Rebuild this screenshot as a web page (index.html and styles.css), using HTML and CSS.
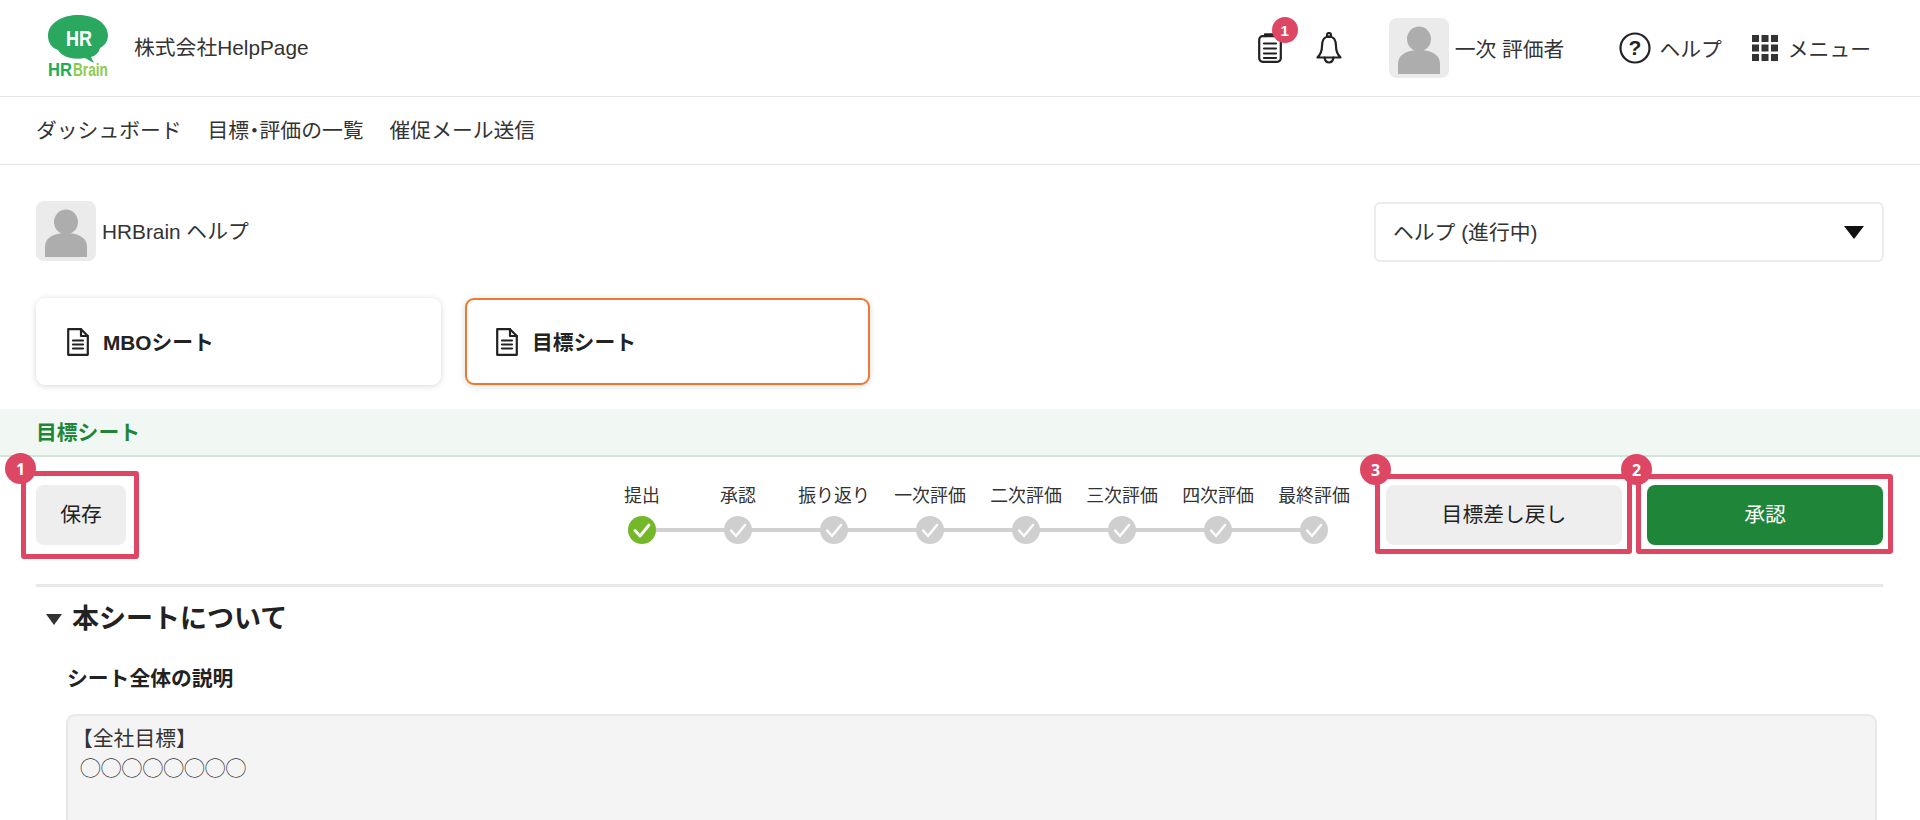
FILE: index.html
```html
<!DOCTYPE html>
<html lang="ja">
<head>
<meta charset="utf-8">
<title>目標シート</title>
<link rel="stylesheet" href="styles.css">
</head>
<body>
<header class="topbar">
  <div class="brand">
    <svg class="logo" viewBox="0 0 60 68" width="60" height="68" aria-label="HRBrain">
      <path class="logo-bubble" d="M30 0C44 0 59 6 60 20C60 27 56 31 52 33C51 38 47 41 43 42L46 48L37 43C27 45 15 43 10 35C4 33 0 28 0 21C0 7 16 0 30 0Z"/>
      <text class="logo-hr" x="18" y="31" textLength="26" lengthAdjust="spacingAndGlyphs">HR</text>
      <text class="logo-name logo-name-a" transform="translate(0 61) scale(.92 1)">HR</text>
      <text class="logo-name logo-name-b" transform="translate(25 61) scale(.76 1)">Brain</text>
    </svg>
    <span class="company">株式会社HelpPage</span>
  </div>
  <div class="top-actions">
    <div class="icon-clip">
      <svg viewBox="0 0 24 30" width="24" height="30" class="ico"><rect x="1.2" y="3.2" width="21.6" height="25.6" rx="3.5"/><path d="M7 3.2V1.4H17V3.2M6 10.5H18M6 15.5H18M6 20.5H18M6 25H18"/></svg>
      <span class="count">1</span>
    </div>
    <svg viewBox="0 0 26 32" width="26" height="32" class="ico icon-bell"><path d="M13 4.5C7.5 4.5 6 9.5 6 14C6 19 5 22 1.5 25.5H24.5C21 22 20 19 20 14C20 9.500 18.500 4.500 13 4.500Z"/><circle cx="13" cy="3" r="2"/><path d="M8.500 25.500C9 29 11 30.500 13 30.500C15 30.500 17 29 17.500 25.500"/></svg>
    <div class="user">
      <svg class="avatar" viewBox="0 0 60 60" width="60" height="60"><rect class="avatar-bg" width="60" height="60" rx="8"/><ellipse class="avatar-fg" cx="30" cy="21" rx="12" ry="12.500"/><path class="avatar-fg" d="M9 56V46C9 36 19 32 30 32C41 32 51 36 51 46V56Z"/></svg>
      <span class="user-name">一次 評価者</span>
    </div>
    <div class="top-link help-link">
      <svg viewBox="0 0 32 32" width="32" height="32" class="ico"><circle cx="16" cy="16" r="14.500"/><text class="help-q" x="16" y="23" text-anchor="middle">?</text></svg>
      <span>ヘルプ</span>
    </div>
    <div class="top-link menu-link">
      <svg viewBox="0 0 26 26" width="26" height="26" class="grid-ico"><rect width="7" height="7"/><rect x="9.500" width="7" height="7"/><rect x="19" width="7" height="7"/><rect y="9.500" width="7" height="7"/><rect x="9.500" y="9.500" width="7" height="7"/><rect x="19" y="9.500" width="7" height="7"/><rect y="19" width="7" height="7"/><rect x="9.500" y="19" width="7" height="7"/><rect x="19" y="19" width="7" height="7"/></svg>
      <span>メニュー</span>
    </div>
  </div>
</header>
<nav class="subnav">
  <a>ダッシュボード</a>
  <a>目標<span class="narrow">・</span>評価の一覧</a>
  <a>催促メール送信</a>
</nav>
<main class="page">
  <div class="person-row">
    <div class="user">
      <svg class="avatar" viewBox="0 0 60 60" width="60" height="60"><rect class="avatar-bg" width="60" height="60" rx="8"/><ellipse class="avatar-fg" cx="30" cy="21" rx="12" ry="12.500"/><path class="avatar-fg" d="M9 56V46C9 36 19 32 30 32C41 32 51 36 51 46V56Z"/></svg>
      <span class="user-name person-name">HRBrain ヘルプ</span>
    </div>
    <div class="select">
      <span class="select-text">ヘルプ (進行中)</span>
      <i class="select-arrow"></i>
    </div>
  </div>
  <div class="cards">
    <div class="card">
      <svg viewBox="0 0 22 28" width="22" height="28" class="ico doc"><path d="M1.200 1.200H14L20.800 8V26.800H1.200Z"/><path d="M14 1.200V8H20.800M6 12.500H16M6 16.500H16M6 20.500H16"/></svg>
      <span class="card-text">MBOシート</span>
    </div>
    <div class="card card-active">
      <svg viewBox="0 0 22 28" width="22" height="28" class="ico doc"><path d="M1.200 1.200H14L20.800 8V26.800H1.200Z"/><path d="M14 1.200V8H20.800M6 12.500H16M6 16.500H16M6 20.500H16"/></svg>
      <span class="card-text">目標シート</span>
    </div>
  </div>
  <div class="band">目標シート</div>
  <div class="toolbar">
    <div class="callout callout-save">
      <button class="btn btn-save">保存</button>
      <span class="callout-box"></span>
      <span class="callout-num">1</span>
    </div>
    <ol class="steps">
      <li class="step step-done"><span class="step-label">提出</span><span class="dot"><svg viewBox="0 0 28 28" width="28" height="28"><path d="M7 14.500L12 20L21 9"/></svg></span></li>
      <li class="step"><span class="step-label">承認</span><span class="dot"><svg viewBox="0 0 28 28" width="28" height="28"><path d="M7 14.500L12 20L21 9"/></svg></span></li>
      <li class="step"><span class="step-label">振り返り</span><span class="dot"><svg viewBox="0 0 28 28" width="28" height="28"><path d="M7 14.500L12 20L21 9"/></svg></span></li>
      <li class="step"><span class="step-label">一次評価</span><span class="dot"><svg viewBox="0 0 28 28" width="28" height="28"><path d="M7 14.500L12 20L21 9"/></svg></span></li>
      <li class="step"><span class="step-label">二次評価</span><span class="dot"><svg viewBox="0 0 28 28" width="28" height="28"><path d="M7 14.500L12 20L21 9"/></svg></span></li>
      <li class="step"><span class="step-label">三次評価</span><span class="dot"><svg viewBox="0 0 28 28" width="28" height="28"><path d="M7 14.500L12 20L21 9"/></svg></span></li>
      <li class="step"><span class="step-label">四次評価</span><span class="dot"><svg viewBox="0 0 28 28" width="28" height="28"><path d="M7 14.500L12 20L21 9"/></svg></span></li>
      <li class="step"><span class="step-label">最終評価</span><span class="dot"><svg viewBox="0 0 28 28" width="28" height="28"><path d="M7 14.500L12 20L21 9"/></svg></span></li>
    </ol>
    <div class="callout callout-wide">
      <button class="btn btn-wide">目標差し戻し</button>
      <span class="callout-box"></span>
      <span class="callout-num">3</span>
    </div>
    <div class="callout callout-wide">
      <button class="btn btn-wide btn-primary">承認</button>
      <span class="callout-box"></span>
      <span class="callout-num">2</span>
    </div>
  </div>
  <section class="about">
    <h2 class="about-title"><i class="about-arrow"></i>本シートについて</h2>
    <h3 class="about-sub">シート全体の説明</h3>
    <div class="about-box"><span class="about-head">【全社目標】</span><br>◯◯◯◯◯◯◯◯</div>
  </section>
</main>
</body>
</html>
```
FILE: styles.css
```css
* { box-sizing: border-box; }
html, body { margin: 0; height: 820px; overflow: hidden; background: #fff; }
body {
  font-family: "Liberation Sans", "Noto Sans CJK JP", sans-serif;
  font-size: 20.8px;
  color: #333;
}
.ico { fill: none; stroke: #222; stroke-width: 2.2; stroke-linejoin: round; stroke-linecap: round; display: block; }

.topbar {
  height: 97px;
  border-bottom: 1px solid #e2e2ea;
  display: flex;
  align-items: center;
  justify-content: space-between;
  padding: 0 49px 0 48px;
}
.brand { display: flex; align-items: center; gap: 26px; }
.logo { display: block; margin-top: 2px; }
.logo-bubble { fill: #2aa860; }
.logo-hr { fill: #fff; font-size: 22px; font-weight: 700; }
.logo-name { font-size: 18px; font-weight: 700; }
.logo-name-a { fill: #22ac55; }
.logo-name-b { fill: #8ccb4e; }
.company { line-height: 1; }
.top-actions { display: flex; align-items: center; }
.icon-clip { position: relative; width: 24px; height: 30px; margin-right: 34px; }
.count {
  position: absolute;
  left: 14px;
  top: -16px;
  width: 26px;
  height: 26px;
  border-radius: 50%;
  background: #dd4764;
  color: #fff;
  font-size: 15px;
  font-weight: 700;
  display: flex;
  align-items: center;
  justify-content: center;
}
.icon-bell { margin-right: 47px; }
.user { display: flex; align-items: center; gap: 6px; }
.avatar { display: block; flex: none; }
.avatar-bg { fill: #ebebeb; }
.avatar-fg { fill: #adadad; }
.user-name { white-space: nowrap; }
.person-name { padding-bottom: 3px; }
.top-link { display: flex; align-items: center; }
.help-link { gap: 8px; margin-left: 55px; }
.help-q { fill: #222; stroke: none; font-size: 21px; font-weight: 700; }
.menu-link { gap: 10px; margin-left: 30px; }
.grid-ico { fill: #333; display: block; }

.subnav {
  height: 68px;
  border-bottom: 1px solid #e2e2ea;
  display: flex;
  align-items: center;
  gap: 26px;
  padding: 0 36px 3px;
}
.narrow { font-feature-settings: "palt"; }

.page { padding-top: 36px; }
.person-row {
  display: flex;
  align-items: flex-start;
  justify-content: space-between;
  padding: 0 36px;
}
.select {
  width: 510px;
  height: 60px;
  border: 2px solid #ececec;
  border-radius: 6px;
  display: flex;
  align-items: center;
  justify-content: space-between;
  padding: 0 18px 0 17px;
  margin-top: 1px;
}
.select-text { padding-bottom: 3px; }
.select-arrow {
  width: 0;
  height: 0;
  border-left: 10px solid transparent;
  border-right: 10px solid transparent;
  border-top: 13px solid #111;
}
.cards { display: flex; gap: 24px; padding: 36px 36px 0; }
.card {
  width: 405px;
  height: 87px;
  background: #fff;
  border-radius: 9px;
  box-shadow: 0 1px 6px rgba(0, 0, 0, .16);
  display: flex;
  align-items: center;
  gap: 14px;
  padding-left: 31px;
  font-weight: 700;
  color: #222;
}
.card-text { padding-bottom: 2px; }
.card-active { border: 2px solid #ec7a2e; padding-left: 29px; }
.band {
  margin-top: 24px;
  height: 48px;
  background: #f1f7f3;
  border-bottom: 2px solid #cfe6d8;
  padding: 0 0 2px 36px;
  display: flex;
  align-items: center;
  color: #1f8639;
  font-weight: 700;
}
.toolbar { display: flex; align-items: flex-start; padding: 28px 37px 0 36px; height: 127px; }
.callout { position: relative; flex: none; }
.callout-box {
  position: absolute;
  border: 5px solid #dd4764;
  border-radius: 3px;
  pointer-events: none;
}
.callout-save .callout-box { left: -15px; right: -13px; top: -14px; bottom: -14px; }
.callout-wide .callout-box { left: -11px; right: -10px; top: -11px; bottom: -9px; }
.callout-num {
  position: absolute;
  width: 31px;
  height: 31px;
  border-radius: 50%;
  background: #dd4764;
  color: #fff;
  font-size: 16px;
  font-weight: 700;
  display: flex;
  align-items: center;
  justify-content: center;
  font-family: "Noto Sans", sans-serif;
}
.callout-save .callout-num { left: -31px; top: -32px; }
.callout-wide .callout-num { left: -26px; top: -31px; }
.callout-wide + .callout-wide { margin-left: 25px; }
.btn {
  font: inherit;
  height: 60px;
  border: 0;
  border-radius: 8px;
  background: #eee;
  color: #222;
  display: block;
  padding: 0;
  line-height: 1;
}
.btn-save { width: 90px; }
.btn-wide { width: 236px; }
.btn-primary { background: #1f8639; color: #fff; }

.steps {
  list-style: none;
  margin: 0 24px 0 auto;
  padding: 0;
  display: flex;
}
.step {
  position: relative;
  width: 96px;
  display: flex;
  flex-direction: column;
  align-items: center;
  font-size: 17.9px;
}
.step + .step::before {
  content: "";
  position: absolute;
  left: -48px;
  width: 96px;
  bottom: 12px;
  height: 4px;
  background: #d0d0d0;
}
.step-label { line-height: 22px; white-space: nowrap; color: #333; }
.dot {
  position: relative;
  z-index: 1;
  width: 28px;
  height: 28px;
  margin-top: 9px;
  border-radius: 50%;
  background: #cfcfcf;
}
.dot svg { display: block; fill: none; stroke: #fff; stroke-width: 2.4; stroke-linecap: round; stroke-linejoin: round; }
.step-done .dot { background: #74b82a; }
.step-done .dot svg { stroke-width: 2.8; }

.about { margin: 0 37px 0 36px; border-top: 3px solid #e8e8e8; padding-top: 13px; }
.about-title {
  margin: 0;
  font-size: 27px;
  line-height: 38px;
  color: #222;
  display: flex;
  align-items: center;
  padding-left: 10px;
  gap: 10px;
}
.about-arrow {
  width: 0;
  height: 0;
  border-left: 8px solid transparent;
  border-right: 8px solid transparent;
  border-top: 11px solid #333;
}
.about-sub { margin: 26px 0 0 31px; font-size: 20.8px; line-height: 30px; color: #222; }
.about-box {
  margin: 20px 6px 0 30px;
  height: 160px;
  background: #f4f4f4;
  border: 2px solid #e8e8e8;
  border-radius: 9px;
  padding: 8px 12px;
  line-height: 30px;
  color: #333;
}
.about-head { margin-left: -8px; }
```
